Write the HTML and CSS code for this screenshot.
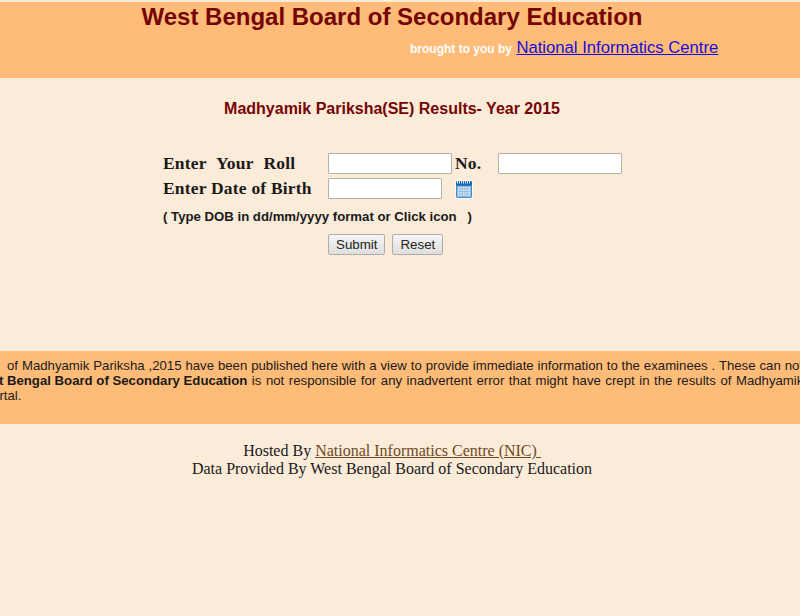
FILE: index.html
```html
<!DOCTYPE html>
<html lang="en">
<head>
<meta charset="utf-8">
<title>Madhyamik Pariksha(SE) Results- Year 2015</title>
<link rel="stylesheet" href="styles.css">
</head>
<body>
<header class="banner">
  <h1 class="banner-title">West Bengal Board of Secondary Education</h1>
  <p class="banner-credit"><span class="credit-label">brought to you by</span> <a href="#" class="credit-link">National Informatics Centre</a></p>
</header>
<main class="content">
  <h2 class="exam-title">Madhyamik Pariksha(SE) Results- Year 2015</h2>
  <form class="result-form">
    <div class="form-row">
      <label class="field-label roll-label" for="roll">Enter Your Roll</label>
      <input class="text-input roll-input" id="roll" type="text">
      <span class="field-label no-label">No.</span>
      <input class="text-input no-input" type="text" aria-label="Number">
    </div>
    <div class="form-row">
      <label class="field-label" for="dob">Enter Date of Birth</label>
      <input class="text-input dob-input" id="dob" type="text">
      <svg class="calendar-icon" viewBox="0 0 18 20" aria-hidden="true">
        <rect x="0" y="1" width="18" height="19" rx="2.5" fill="#fdfbf8"/>
        <rect x="1" y="2" width="16" height="17" rx="2" fill="#3d8fd6"/>
        <rect x="1" y="2" width="16" height="4.500" rx="1.5" fill="#1a66ad"/>
        <path d="M2.500 1v3.500M4.500 1v3.500M6.500 1v3.500M8.500 1v3.500M10.500 1v3.500M12.500 1v3.500M14.500 1v3.500" stroke="#e4edf5" stroke-width="1"/>
        <rect x="2.500" y="7.500" width="13" height="10" fill="#dbe8f4"/>
        <path d="M5 7.500v10M7.500 7.500v10M10 7.500v10M12.500 7.500v10M2.500 10h13M2.500 12.500h13M2.500 15h13" stroke="#8db4d9" stroke-width="0.8"/>
      </svg>
    </div>
    <p class="format-hint">( Type DOB in dd/mm/yyyy format or Click icon &nbsp;&nbsp;)</p>
    <div class="button-row">
      <button class="form-button" type="button">Submit</button>
      <button class="form-button" type="button">Reset</button>
    </div>
  </form>
</main>
<section class="notice">
  <p class="notice-line line-one">of Madhyamik Pariksha ,2015 have been published here with a view to provide immediate information to the examinees . These can not</p>
  <p class="notice-line line-two"><strong class="notice-strong">West Bengal Board of Secondary Education</strong> is not responsible for any inadvertent error that might have crept in the results of Madhyamik</p>
  <p class="notice-line line-three">e-portal.</p>
</section>
<footer class="site-footer">
  <div>Hosted By <a href="#" class="footer-link">National Informatics Centre (NIC)&nbsp;</a></div>
  <div>Data Provided By West Bengal Board of Secondary Education</div>
</footer>
</body>
</html>
```
FILE: styles.css
```css
html, body {
  margin: 0;
  padding: 0;
  height: 616px;
  overflow: hidden;
}
body {
  background: #fbebd9;
  width: 800px;
  color: #1a1a1a;
}
.banner {
  box-sizing: border-box;
  margin-top: 2px;
  height: 76px;
  width: 800px;
  background: #ffbb78;
  font-family: "Liberation Sans", Arial, sans-serif;
  padding-right: 16px;
}
.banner-title {
  margin: 0;
  padding-top: 1px;
  text-align: center;
  font-size: 24px;
  line-height: 27px;
  font-weight: bold;
  color: #750505;
}
.banner-credit {
  margin: 0;
  padding: 8px 0 0 410px;
  line-height: 20px;
}
.credit-label {
  font-size: 12px;
  font-weight: bold;
  color: #fff;
}
.credit-link {
  font-size: 16.67px;
  color: #1a0dd8;
}
.content {
  width: 784px;
}
.exam-title {
  margin: 0;
  padding-top: 22px;
  text-align: center;
  font-family: "Liberation Sans", Arial, sans-serif;
  font-size: 16px;
  line-height: 18px;
  font-weight: bold;
  color: #750505;
}
.result-form {
  padding: 33px 0 0 163px;
  height: 200px;
}
.form-row {
  display: flex;
  align-items: center;
  height: 25px;
}
.field-label {
  font-family: "Liberation Serif", "Times New Roman", serif;
  font-size: 17.5px;
  font-weight: bold;
  color: #1a1a1a;
  width: 165px;
  letter-spacing: 0.2px;
}
.roll-label {
  word-spacing: 5.5px;
}
.no-label {
  width: auto;
  margin: 0 17px 0 3px;
}
.text-input {
  box-sizing: border-box;
  height: 21px;
  padding: 0;
  background: #fff;
  border: 1px solid #b5b2ad;
  border-radius: 1px;
}
.roll-input {
  width: 124px;
}
.no-input {
  width: 124px;
}
.dob-input {
  width: 114px;
}
.calendar-icon {
  width: 18px;
  height: 20px;
  margin-left: 13px;
}
.format-hint {
  margin: 8px 0 0;
  font-family: "Liberation Sans", Arial, sans-serif;
  font-size: 13.2px;
  line-height: 15px;
  font-weight: bold;
  color: #1a1a1a;
}
.button-row {
  display: flex;
  gap: 7px;
  padding: 10px 0 0 165px;
}
.form-button {
  box-sizing: border-box;
  height: 21px;
  padding: 0 7px;
  font-family: "Liberation Sans", Arial, sans-serif;
  font-size: 13.33px;
  color: #222;
  background: linear-gradient(#f5f5f5, #dedede);
  border: 1px solid #adadad;
  border-radius: 2px;
}
.notice {
  box-sizing: border-box;
  height: 73px;
  width: 800px;
  padding-top: 7px;
  overflow: hidden;
  background: #ffbb78;
  font-family: "Liberation Sans", Arial, sans-serif;
  font-size: 13.2px;
  line-height: 15px;
  color: #1a1a1a;
}
.notice-line {
  margin: 0;
  white-space: nowrap;
}
.line-one {
  margin-left: 7px;
  word-spacing: 0.25px;
}
.line-two {
  margin-left: -28px;
  word-spacing: 0.9px;
}
.notice-strong {
  word-spacing: 0;
}
.line-three {
  margin-left: -27px;
}
.site-footer {
  width: 784px;
  padding-top: 18px;
  text-align: center;
  font-family: "Liberation Serif", "Times New Roman", serif;
  font-size: 16px;
  line-height: 18px;
  color: #1a1a1a;
}
.footer-link {
  color: #6e4a1e;
}
```
